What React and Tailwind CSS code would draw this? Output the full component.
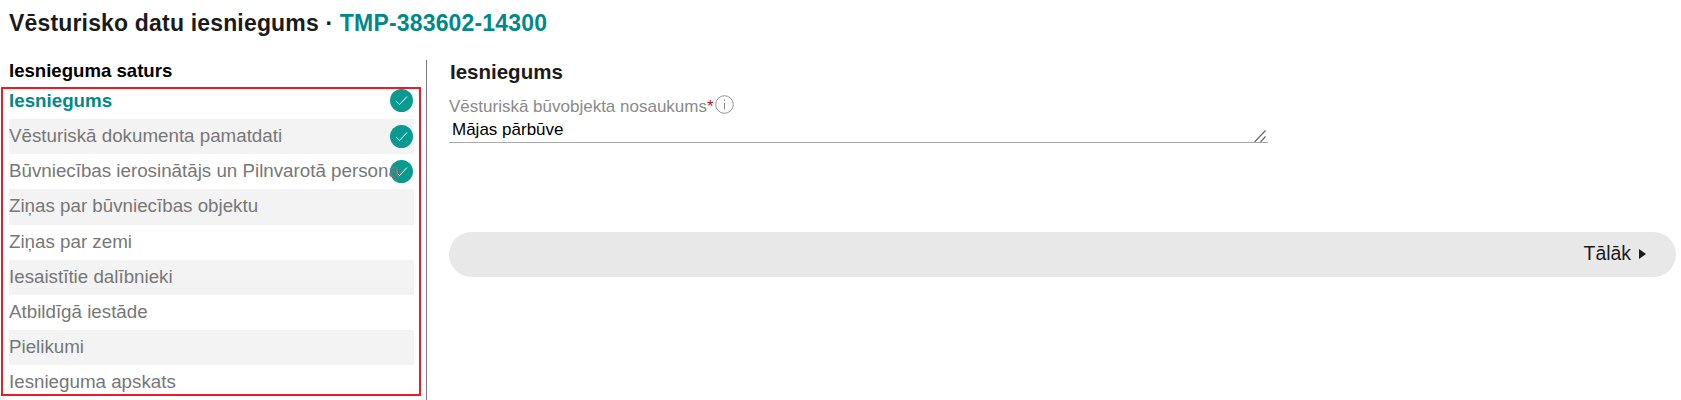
const items = [
  { t: "Iesniegums", active: true, done: true },
  { t: "Vēsturiskā dokumenta pamatdati", done: true },
  { t: "Būvniecības ierosinātājs un Pilnvarotā persona", done: true },
  { t: "Ziņas par būvniecības objektu" },
  { t: "Ziņas par zemi" },
  { t: "Iesaistītie dalībnieki" },
  { t: "Atbildīgā iestāde" },
  { t: "Pielikumi" },
  { t: "Iesnieguma apskats" },
];

function Check({ first }) {
  return (
    <span className={`absolute right-[1px] w-[23px] h-[23px] rounded-full bg-[#0b9a90] flex items-center justify-center ${first ? "top-0" : "top-[6px]"}`}>
      <svg width="13" height="11" viewBox="0 0 13 11" fill="none" stroke="#ffffff" strokeWidth="1">
        <path d="M1 6 L4.5 9.5 L12 1.5" />
      </svg>
    </span>
  );
}

export default function App() {
  return (
    <div className="h-[400px] w-full overflow-hidden bg-white font-['Liberation_Sans',Arial,sans-serif] text-[#1b1b1b]">
      <h1 className="h-[60px] pl-[9px] pt-[10px] text-[23px] leading-[26px] font-bold tracking-[0.17px]">
        Vēsturisko datu iesniegums · <span className="text-[#00888a]">TMP-383602-14300</span>
      </h1>
      <div className="flex h-[340px]">
        <div className="w-[427px] shrink-0 border-r border-[#777777]">
          <div className="pl-[9px] text-[18.6px] leading-[21px] font-bold text-black h-[27px]">Iesnieguma saturs</div>
          <ul className="ml-[1px] w-[420px] h-[309px] border-2 border-[#ed1c24] pl-[6px] pr-[5px] overflow-hidden">
            {items.map((it, i) => (
              <li
                key={it.t}
                className={`relative text-[18.75px] whitespace-nowrap ${i === 0 ? "h-[30px] leading-[24px]" : "h-[35.2px] leading-[33px]"} ${i % 2 === 1 ? "bg-[#f3f3f3]" : ""} ${it.active ? "font-bold text-[#00888a]" : "text-[#777777]"}`}
              >
                {it.done && <Check first={i === 0} />}
                <span className="relative z-10">{it.t}</span>
              </li>
            ))}
          </ul>
        </div>
        <div className="flex-1 pl-[22px] pr-[5px] min-w-0">
          <h2 className="ml-[1px] text-[20.5px] leading-[24px] font-bold h-[34px]">Iesniegums</h2>
          <div className="relative w-[831px]">
            <label className="flex items-center h-[24px] text-[17px] leading-[24px] text-[#8a8a8a] pt-[2px]">
              Vēsturiskā būvobjekta nosaukums<span className="text-[#b01030]">*</span>
              <svg className="ml-[1px] -mt-[6px]" width="19" height="19" viewBox="0 0 19 19" fill="none" stroke="#8a8a8a">
                <circle cx="9.5" cy="9.5" r="8.8" strokeWidth="0.9" />
                <path d="M9.5 8 V14.5" strokeWidth="1.1" />
                <path d="M9.5 4.5 V6" strokeWidth="1.2" />
              </svg>
            </label>
            <div className="relative w-[819px]">
              <textarea
                defaultValue="Mājas pārbūve"
                rows={1}
                className="block w-full h-[25px] pl-[3px] pt-[2px] text-[17px] leading-[20px] text-black border-b-[1.5px] border-[#aaaaaa] outline-none resize-none overflow-hidden"
              />
              <svg className="absolute right-[2px] bottom-[1px]" width="12" height="12" viewBox="0 0 12 12" fill="none" stroke="#666666" strokeWidth="1.2">
                <path d="M0.5 12 L11.5 0.5" />
                <path d="M6.5 12 L11.5 6.5" />
              </svg>
            </div>
          </div>
          <div className="mt-[89px] h-[45px] rounded-full bg-[#e8e8e8] flex items-center justify-end pr-[30px] text-[19.4px] text-[#1b1b1b]">
            <span className="-mt-[1px]">Tālāk</span>
            <svg className="ml-[8px] -mt-[2px]" width="7" height="10" viewBox="0 0 7 10"><path d="M0 0 L7 5 L0 10 Z" fill="#1b1b1b" /></svg>
          </div>
        </div>
      </div>
    </div>
  );
}
